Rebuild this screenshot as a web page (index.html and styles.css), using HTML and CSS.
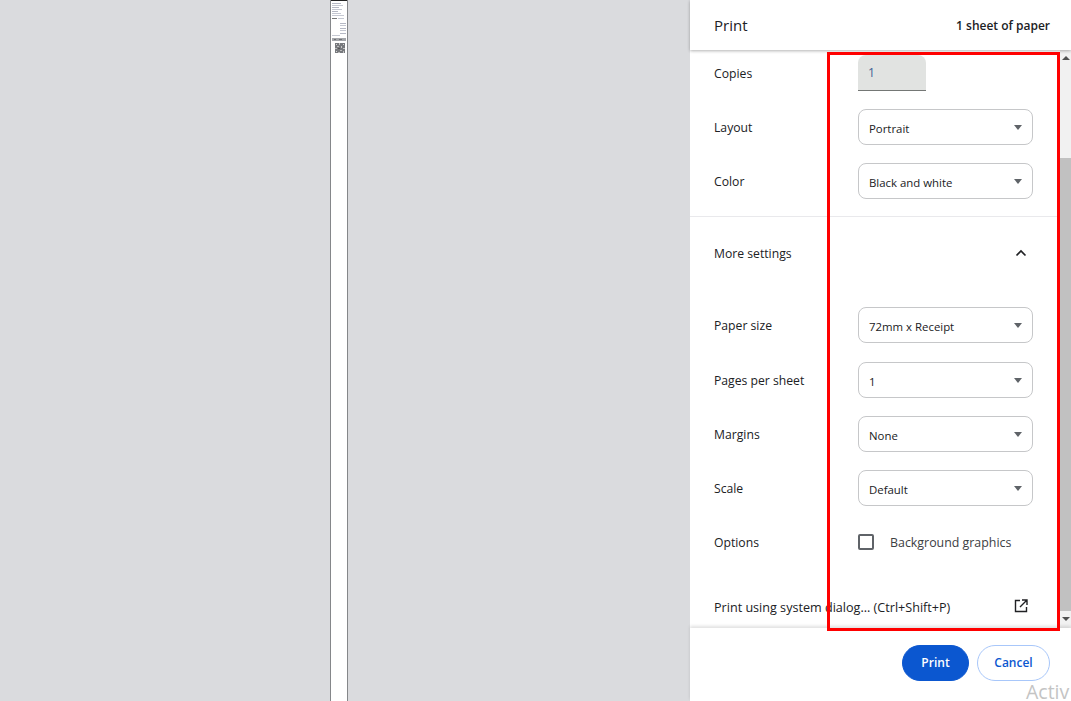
FILE: index.html
```html
<!DOCTYPE html>
<html lang="en">
<head>
  <meta charset="UTF-8">
  <title>Print</title>
  <link rel="stylesheet" href="styles.css">
</head>
<body>
  <div class="preview">
    <div class="paper">
      <svg class="receipt" width="16" height="54" viewBox="0 0 16 54">
        <rect x="0" y="0" width="16" height="1" fill="#222"/>
        <rect x="1" y="3" width="9" height="1" fill="#b5b8c4"/>
        <rect x="1" y="5" width="11" height="1" fill="#c5c8d2"/>
        <rect x="1" y="7" width="7" height="1" fill="#b5b8c4"/>
        <rect x="1" y="9" width="10" height="1" fill="#c5c8d2"/>
        <rect x="1" y="11" width="6" height="1" fill="#b5b8c4"/>
        <rect x="1" y="13" width="9" height="1" fill="#c5c8d2"/>
        <rect x="1" y="15" width="12" height="1" fill="#c5c8d2"/>
        <rect x="1" y="18" width="5" height="1" fill="#777"/>
        <rect x="7" y="18" width="6" height="1" fill="#c5c8d2"/>
        <rect x="9" y="23" width="6" height="1" fill="#b5b8c4"/>
        <rect x="9" y="25" width="6" height="1" fill="#c5c8d2"/>
        <rect x="9" y="28" width="6" height="1" fill="#b5b8c4"/>
        <rect x="9" y="30" width="6" height="1" fill="#c5c8d2"/>
        <rect x="9" y="33" width="6" height="1" fill="#b5b8c4"/>
        <rect x="1" y="35" width="8" height="1" fill="#c5c8d2"/>
        <rect x="1" y="38" width="14" height="3" fill="#a4a6aa"/>
        <rect x="3" y="39" width="2" height="1" fill="#6f7175"/>
        <rect x="8" y="39" width="3" height="1" fill="#6f7175"/>
        <rect x="4" y="43" width="10" height="10" fill="#77797d"/>
        <rect x="5" y="44" width="1" height="1" fill="#d5d5d5"/>
        <rect x="8" y="43" width="1" height="2" fill="#c4c4c4"/>
        <rect x="12" y="44" width="1" height="1" fill="#d5d5d5"/>
        <rect x="6" y="46" width="2" height="1" fill="#bbb"/>
        <rect x="10" y="46" width="1" height="2" fill="#c4c4c4"/>
        <rect x="4" y="48" width="2" height="1" fill="#bbb"/>
        <rect x="7" y="48" width="2" height="1" fill="#555"/>
        <rect x="12" y="48" width="2" height="1" fill="#c4c4c4"/>
        <rect x="9" y="50" width="2" height="1" fill="#bbb"/>
        <rect x="5" y="51" width="1" height="1" fill="#d5d5d5"/>
        <rect x="12" y="51" width="1" height="2" fill="#c4c4c4"/>
        <rect x="7" y="52" width="2" height="1" fill="#bbb"/>
      </svg>
    </div>
  </div>

  <aside class="sidebar">
    <header class="top">
      <h1>Print</h1>
      <span class="sheets">1 sheet of paper</span>
    </header>

    <div class="body">
      <div class="settings">
        <div class="row copies-row">
          <label>Copies</label>
          <div class="copies">1</div>
        </div>
        <div class="row">
          <label>Layout</label>
          <div class="select">Portrait</div>
        </div>
        <div class="row">
          <label>Color</label>
          <div class="select">Black and white</div>
        </div>

        <div class="more">
          <span>More settings</span>
          <svg width="12" height="8" viewBox="0 0 12 8"><path d="M1.5 6.5 6 2l4.5 4.5" fill="none" stroke="#202124" stroke-width="1.7"/></svg>
        </div>

        <div class="row paper-row">
          <label>Paper size</label>
          <div class="select">72mm x Receipt</div>
        </div>
        <div class="row">
          <label>Pages per sheet</label>
          <div class="select">1</div>
        </div>
        <div class="row">
          <label>Margins</label>
          <div class="select">None</div>
        </div>
        <div class="row">
          <label>Scale</label>
          <div class="select">Default</div>
        </div>
        <div class="row">
          <label>Options</label>
          <div class="option"><span class="checkbox"></span>Background graphics</div>
        </div>

        <div class="system">
          <span>Print using system dialog... (Ctrl+Shift+P)</span>
          <svg width="14" height="14" viewBox="0 0 14 14"><path d="M6 1.5H1.5v11h11V8M8 1h5v5M13 1 6 8" fill="none" stroke="#202124" stroke-width="1.4"/></svg>
        </div>
      </div>

      <div class="scrollbar">
        <div class="arrow up"></div>
        <div class="track"><div class="thumb"></div></div>
        <div class="arrow down"></div>
      </div>
    </div>

    <footer class="actions">
      <button class="btn primary">Print</button>
      <button class="btn">Cancel</button>
    </footer>
  </aside>

  <div class="highlight"></div>
  <div class="watermark">Activ</div>
</body>
</html>
```

FILE: styles.css
```css
html, body {
  height: 100%;
}

body {
  margin: 0;
  display: flex;
  height: 701px;
  overflow: hidden;
  font-family: "Open Sans", "Noto Sans", sans-serif;
  font-size: 12.2px;
  color: #202124;
  background: #fff;
}

.preview {
  width: 690px;
  background: #dadbde;
  display: flex;
  justify-content: flex-start;
  padding-left: 330px;
  box-sizing: border-box;
}

.paper {
  width: 16px;
  background: #fff;
  border-left: 1px solid #85878a;
  border-right: 1px solid #85878a;
}

.receipt {
  display: block;
}

.sidebar {
  width: 381px;
  display: flex;
  flex-direction: column;
}

.top {
  height: 50px;
  padding: 0 21px 0 24px;
  display: flex;
  justify-content: space-between;
  align-items: center;
  box-sizing: border-box;
  box-shadow: 0 1px 3px rgba(0, 0, 0, 0.3);
  position: relative;
}

.top h1 {
  margin: 0;
  font-size: 15px;
  font-weight: 400;
}

.sheets {
  font-size: 12px;
  font-weight: 600;
}

.body {
  height: 578px;
  display: flex;
}

.settings {
  width: 370px;
  padding-top: 1px;
  box-sizing: border-box;
}

.row {
  height: 54px;
  padding-left: 24px;
  display: flex;
  align-items: center;
}

.row label {
  width: 144px;
}

/* the panel is scrolled a little, so the first row is shorter */
.copies-row {
  height: 49px;
  padding-top: 4px;
  align-items: flex-start;
  box-sizing: border-box;
}

.copies-row label {
  line-height: 38px;
}

.paper-row {
  margin-bottom: 1px;
}

.select {
  width: 175px;
  height: 36px;
  padding: 2px 0 0 10px;
  box-sizing: border-box;
  display: flex;
  align-items: center;
  border: 1px solid #c6c7c9;
  border-radius: 8px;
  font-size: 11.4px;
  position: relative;
}

.select::after {
  content: "";
  position: absolute;
  right: 10px;
  top: 15px;
  border-left: 4px solid transparent;
  border-right: 4px solid transparent;
  border-top: 5px solid #5f6368;
}

.copies {
  width: 68px;
  height: 36px;
  padding-left: 10px;
  box-sizing: border-box;
  display: flex;
  align-items: center;
  background: #e1e3e1;
  border-bottom: 1px solid #747775;
  border-radius: 8px 8px 0 0;
  color: #3f5f94;
}

.more {
  margin-top: 8px;
  margin-bottom: 9px;
  height: 73px;
  border-top: 1px solid #e9e9ec;
  padding: 0 24px;
  display: flex;
  justify-content: space-between;
  align-items: center;
  box-sizing: border-box;
}

.more svg {
  margin-right: 9px;
}

.option {
  display: flex;
  align-items: center;
  font-size: 12.4px;
  color: #3c4043;
}

.checkbox {
  width: 12px;
  height: 12px;
  margin-right: 16px;
  border: 2px solid #5f6368;
  border-radius: 2px;
}

.system {
  margin-top: 11px;
  height: 54px;
  padding: 0 24px;
  display: flex;
  justify-content: space-between;
  align-items: center;
  box-sizing: border-box;
  font-size: 12.6px;
}

.system svg {
  margin: -2px 8px 0 0;
}

.scrollbar {
  width: 11px;
  background: #f1f1f1;
  display: flex;
  flex-direction: column;
}

.arrow {
  height: 17px;
  position: relative;
}

.arrow::after {
  content: "";
  position: absolute;
  left: 2px;
  top: 6px;
  border-left: 4px solid transparent;
  border-right: 4px solid transparent;
}

.arrow.up::after {
  border-bottom: 4px solid #505050;
}

.arrow.down::after {
  border-top: 4px solid #505050;
}

.track {
  flex: 1;
  padding-top: 91px;
}

.thumb {
  height: 453px;
  background: #c1c1c1;
}

.actions {
  flex: 1;
  padding: 0 21px 4px 0;
  display: flex;
  justify-content: flex-end;
  align-items: center;
  gap: 8px;
  box-shadow: 0 -2px 3px rgba(0, 0, 0, 0.12);
  position: relative;
}

.btn {
  width: 73px;
  height: 36px;
  font-family: inherit;
  font-size: 12px;
  font-weight: 600;
  color: #0b57d0;
  background: #fff;
  border: 1px solid #a8c7fa;
  border-radius: 18px;
}

.btn.primary {
  width: 67px;
  color: #fff;
  background: #0b57d0;
  border-color: #0b57d0;
}

.highlight {
  position: absolute;
  left: 827px;
  top: 52px;
  width: 233px;
  height: 579px;
  box-sizing: border-box;
  border: 3px solid #ff0000;
}

.watermark {
  position: absolute;
  left: 1026px;
  top: 683px;
  font-size: 19.5px;
  line-height: 18px;
  color: #c4c4c4;
}
```
